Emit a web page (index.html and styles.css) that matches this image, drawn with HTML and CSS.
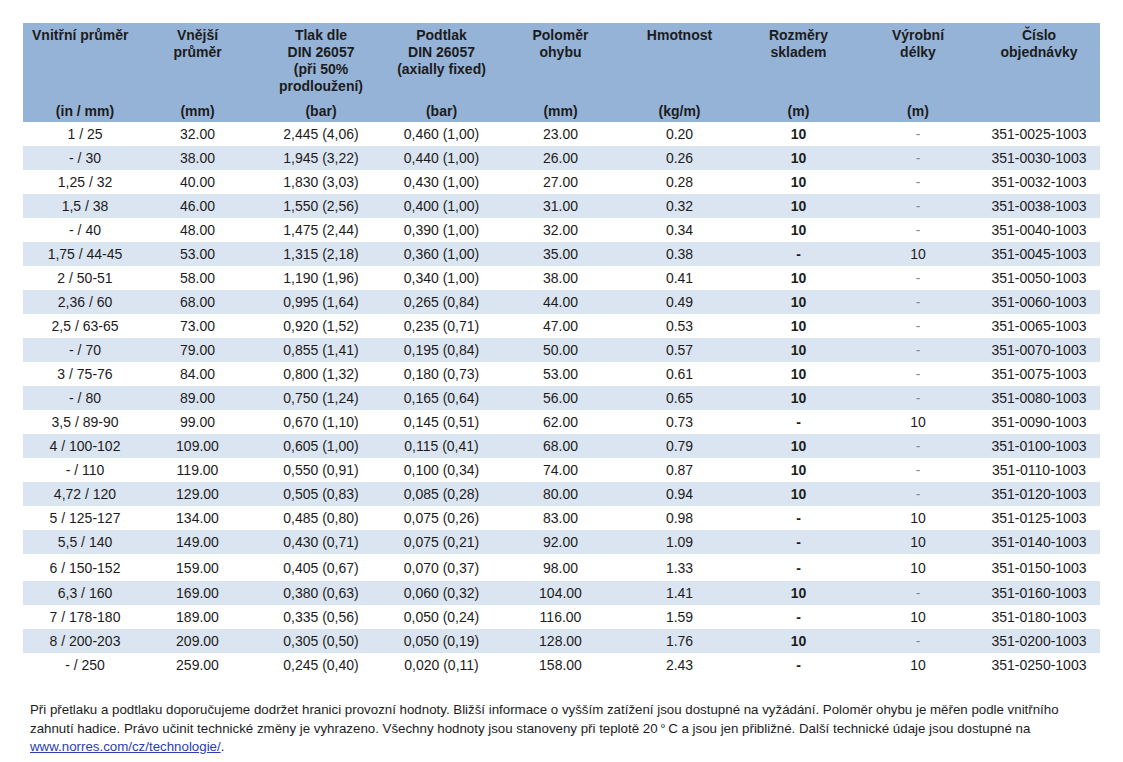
FILE: index.html
```html
<!DOCTYPE html>
<html lang="cs">
<head>
<meta charset="utf-8">
<title>Technické údaje</title>
<link rel="stylesheet" href="styles.css">
</head>
<body>
<main class="page">
<table class="spec">
<colgroup>
<col class="c1"><col class="c2"><col class="c3"><col class="c4"><col class="c5"><col class="c6"><col class="c7"><col class="c8"><col class="c9">
</colgroup>
<thead>
<tr class="titles">
<th class="first">Vnitřní průměr</th>
<th class="second">Vnější<br>průměr</th>
<th>Tlak dle<br>DIN 26057<br>(při 50%<br>prodloužení)</th>
<th>Podtlak<br>DIN 26057<br>(axially fixed)</th>
<th>Poloměr<br>ohybu</th>
<th>Hmotnost</th>
<th>Rozměry<br>skladem</th>
<th>Výrobní<br>délky</th>
<th>Číslo<br>objednávky</th>
</tr>
<tr class="units">
<th class="first">(in / mm)</th>
<th class="second">(mm)</th>
<th>(bar)</th>
<th>(bar)</th>
<th>(mm)</th>
<th>(kg/m)</th>
<th>(m)</th>
<th>(m)</th>
<th></th>
</tr>
</thead>
<tbody>
<tr><td class="first">1 / 25</td><td class="second">32.00</td><td>2,445 (4,06)</td><td>0,460 (1,00)</td><td>23.00</td><td>0.20</td><td class="stock">10</td><td class="dash">-</td><td>351-0025-1003</td></tr>
<tr><td class="first">- / 30</td><td class="second">38.00</td><td>1,945 (3,22)</td><td>0,440 (1,00)</td><td>26.00</td><td>0.26</td><td class="stock">10</td><td class="dash">-</td><td>351-0030-1003</td></tr>
<tr><td class="first">1,25 / 32</td><td class="second">40.00</td><td>1,830 (3,03)</td><td>0,430 (1,00)</td><td>27.00</td><td>0.28</td><td class="stock">10</td><td class="dash">-</td><td>351-0032-1003</td></tr>
<tr><td class="first">1,5 / 38</td><td class="second">46.00</td><td>1,550 (2,56)</td><td>0,400 (1,00)</td><td>31.00</td><td>0.32</td><td class="stock">10</td><td class="dash">-</td><td>351-0038-1003</td></tr>
<tr><td class="first">- / 40</td><td class="second">48.00</td><td>1,475 (2,44)</td><td>0,390 (1,00)</td><td>32.00</td><td>0.34</td><td class="stock">10</td><td class="dash">-</td><td>351-0040-1003</td></tr>
<tr><td class="first">1,75 / 44-45</td><td class="second">53.00</td><td>1,315 (2,18)</td><td>0,360 (1,00)</td><td>35.00</td><td>0.38</td><td class="stock">-</td><td>10</td><td>351-0045-1003</td></tr>
<tr><td class="first">2 / 50-51</td><td class="second">58.00</td><td>1,190 (1,96)</td><td>0,340 (1,00)</td><td>38.00</td><td>0.41</td><td class="stock">10</td><td class="dash">-</td><td>351-0050-1003</td></tr>
<tr><td class="first">2,36 / 60</td><td class="second">68.00</td><td>0,995 (1,64)</td><td>0,265 (0,84)</td><td>44.00</td><td>0.49</td><td class="stock">10</td><td class="dash">-</td><td>351-0060-1003</td></tr>
<tr><td class="first">2,5 / 63-65</td><td class="second">73.00</td><td>0,920 (1,52)</td><td>0,235 (0,71)</td><td>47.00</td><td>0.53</td><td class="stock">10</td><td class="dash">-</td><td>351-0065-1003</td></tr>
<tr><td class="first">- / 70</td><td class="second">79.00</td><td>0,855 (1,41)</td><td>0,195 (0,84)</td><td>50.00</td><td>0.57</td><td class="stock">10</td><td class="dash">-</td><td>351-0070-1003</td></tr>
<tr><td class="first">3 / 75-76</td><td class="second">84.00</td><td>0,800 (1,32)</td><td>0,180 (0,73)</td><td>53.00</td><td>0.61</td><td class="stock">10</td><td class="dash">-</td><td>351-0075-1003</td></tr>
<tr><td class="first">- / 80</td><td class="second">89.00</td><td>0,750 (1,24)</td><td>0,165 (0,64)</td><td>56.00</td><td>0.65</td><td class="stock">10</td><td class="dash">-</td><td>351-0080-1003</td></tr>
<tr><td class="first">3,5 / 89-90</td><td class="second">99.00</td><td>0,670 (1,10)</td><td>0,145 (0,51)</td><td>62.00</td><td>0.73</td><td class="stock">-</td><td>10</td><td>351-0090-1003</td></tr>
<tr><td class="first">4 / 100-102</td><td class="second">109.00</td><td>0,605 (1,00)</td><td>0,115 (0,41)</td><td>68.00</td><td>0.79</td><td class="stock">10</td><td class="dash">-</td><td>351-0100-1003</td></tr>
<tr><td class="first">- / 110</td><td class="second">119.00</td><td>0,550 (0,91)</td><td>0,100 (0,34)</td><td>74.00</td><td>0.87</td><td class="stock">10</td><td class="dash">-</td><td>351-0110-1003</td></tr>
<tr><td class="first">4,72 / 120</td><td class="second">129.00</td><td>0,505 (0,83)</td><td>0,085 (0,28)</td><td>80.00</td><td>0.94</td><td class="stock">10</td><td class="dash">-</td><td>351-0120-1003</td></tr>
<tr><td class="first">5 / 125-127</td><td class="second">134.00</td><td>0,485 (0,80)</td><td>0,075 (0,26)</td><td>83.00</td><td>0.98</td><td class="stock">-</td><td>10</td><td>351-0125-1003</td></tr>
<tr><td class="first">5,5 / 140</td><td class="second">149.00</td><td>0,430 (0,71)</td><td>0,075 (0,21)</td><td>92.00</td><td>1.09</td><td class="stock">-</td><td>10</td><td>351-0140-1003</td></tr>
<tr class="tall"><td class="first">6 / 150-152</td><td class="second">159.00</td><td>0,405 (0,67)</td><td>0,070 (0,37)</td><td>98.00</td><td>1.33</td><td class="stock">-</td><td>10</td><td>351-0150-1003</td></tr>
<tr><td class="first">6,3 / 160</td><td class="second">169.00</td><td>0,380 (0,63)</td><td>0,060 (0,32)</td><td>104.00</td><td>1.41</td><td class="stock">10</td><td class="dash">-</td><td>351-0160-1003</td></tr>
<tr><td class="first">7 / 178-180</td><td class="second">189.00</td><td>0,335 (0,56)</td><td>0,050 (0,24)</td><td>116.00</td><td>1.59</td><td class="stock">-</td><td>10</td><td>351-0180-1003</td></tr>
<tr><td class="first">8 / 200-203</td><td class="second">209.00</td><td>0,305 (0,50)</td><td>0,050 (0,19)</td><td>128.00</td><td>1.76</td><td class="stock">10</td><td class="dash">-</td><td>351-0200-1003</td></tr>
<tr><td class="first">- / 250</td><td class="second">259.00</td><td>0,245 (0,40)</td><td>0,020 (0,11)</td><td>158.00</td><td>2.43</td><td class="stock">-</td><td>10</td><td>351-0250-1003</td></tr>
</tbody>
</table>
<p class="note">Při přetlaku a podtlaku doporučujeme dodržet hranici provozní hodnoty. Bližší informace o vyšším zatížení jsou dostupné na vyžádání. Poloměr ohybu je měřen podle vnitřního zahnutí hadice. Právo učinit technické změny je vyhrazeno. Všechny hodnoty jsou stanoveny při teplotě 20&#8201;°&#8201;C a jsou jen přibližné. Další technické údaje jsou dostupné na <a href="#">www.norres.com/cz/technologie/</a>.</p>
</main>
</body>
</html>
```
FILE: styles.css
```css
html, body {
  margin: 0;
  padding: 0;
  background: #ffffff;
}

body {
  font-family: "Liberation Sans", Arial, sans-serif;
  color: #1c1c1c;
}

.page {
  padding: 23px 23px 0 23px;
}

.spec {
  width: 1077px;
  border-collapse: collapse;
  border-spacing: 0;
  table-layout: fixed;
  font-size: 14px;
}

.c1 { width: 118px; }
.c2 { width: 119px; }
.c3 { width: 122px; }
.c4 { width: 119px; }
.c5 { width: 119px; }
.c6 { width: 119px; }
.c7 { width: 119px; }
.c8 { width: 120px; }
.c9 { width: 122px; }

.spec th {
  background: #95b3d7;
  font-weight: bold;
  text-align: center;
  padding: 0;
  white-space: nowrap;
}

.titles th {
  height: 74px;
  vertical-align: top;
  padding-top: 4px;
  line-height: 17px;
}

.titles th.first {
  text-align: left;
  padding-left: 9px;
}

.units th {
  height: 19px;
  line-height: 17px;
  vertical-align: top;
  padding-top: 2px;
}

.spec td {
  height: 24px;
  padding: 0;
  text-align: center;
  vertical-align: middle;
  white-space: nowrap;
}

.spec tbody tr:nth-child(even) td {
  background: #dbe5f1;
}

.spec tbody tr.tall td {
  height: 27px;
}

.spec .first {
  padding-left: 6px;
}

.spec .second {
  padding-right: 6px;
}

.spec td.stock {
  font-weight: bold;
}

.spec td.dash {
  color: #8a8a8a;
}

.note {
  margin: 24px 0 0 7px;
  width: 1062px;
  font-size: 13.3px;
  line-height: 18.5px;
}

.note a {
  color: #2b3db0;
  text-decoration: underline;
}
```
